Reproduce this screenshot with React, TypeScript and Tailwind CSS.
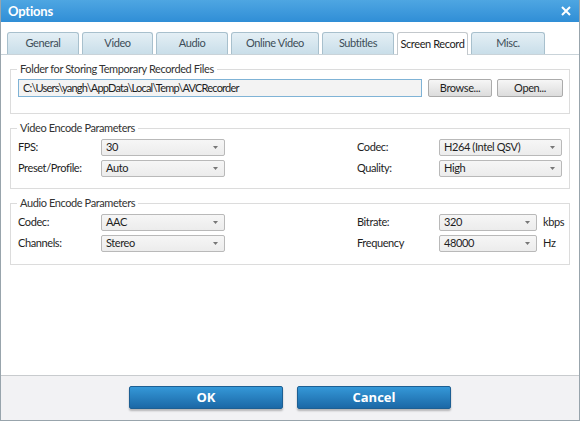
import React from "react";

const font = { fontFamily: 'Lato, "Open Sans", sans-serif' };

const tabs = ["General", "Video", "Audio", "Online Video", "Subtitles", "Screen Record", "Misc."];
const tabWidths = ["w-[72px]", "w-[71px]", "w-[72px]", "w-[88px]", "w-[72px]", "w-[71px]", "w-[74px]"];

const Arrow: React.FC = () => (
  <svg width="5" height="3" viewBox="0 0 5 3" className="shrink-0">
    <path d="M0 0h5L2.5 3z" fill="#777" />
  </svg>
);

const Select: React.FC<{ value: string; width: string }> = ({ value, width }) => (
  <div
    className={`${width} h-[17px] flex items-center justify-between pl-[4px] pr-[6px] border border-[#b9b9b9] rounded-[2px] bg-gradient-to-b from-[#f6f6f6] to-[#ececec] text-[11px] text-[#1e1e1e]`}
  >
    <span>{value}</span>
    <Arrow />
  </div>
);

const Group: React.FC<{ title: string; children: React.ReactNode; className?: string }> = ({ title, children, className }) => (
  <div className={`relative mx-[9px] border border-[#dcdcdc] ${className ?? ""}`}>
    <span className="absolute top-[-8px] left-[6px] px-[3px] bg-white text-[11px] leading-[14px] text-[#333]">{title}</span>
    {children}
  </div>
);

const Row: React.FC<{
  l1: string;
  v1: string;
  l2: string;
  v2: string;
  w2?: string;
  unit?: string;
}> = ({ l1, v1, l2, v2, w2 = "w-[124px]", unit }) => (
  <div className="flex items-center h-[17px]">
    <span className="w-[83px] text-[11px] text-[#1e1e1e]">{l1}</span>
    <Select value={v1} width="w-[124px]" />
    <span className="ml-[132px] w-[82px] text-[11px] text-[#1e1e1e]">{l2}</span>
    <Select value={v2} width={w2} />
    {unit && <span className="ml-[6px] text-[11px] text-[#1e1e1e]">{unit}</span>}
  </div>
);

const btnFont = { fontFamily: '"Open Sans", sans-serif' };

const App: React.FC = () => {
  return (
    <div style={font} className="w-[580px] h-[421px] flex flex-col bg-white border-x border-b border-[#98a4ac] overflow-hidden tracking-[-0.4px]">
      <div className="h-[22px] -mx-px shrink-0 flex items-center justify-between pl-[8px] pr-[9px] bg-gradient-to-b from-[#4ea6e2] to-[#2f8ed6]">
        <span className="text-white font-bold text-[13px] mt-[1px] tracking-[-0.2px]">Options</span>
        <svg width="10" height="10" viewBox="0 0 10 10">
          <path d="M1 1L9 9M9 1L1 9" stroke="white" strokeWidth="2" />
        </svg>
      </div>

      <div className="mt-[10px] flex items-end gap-[3px] pl-[6px] border-b border-[#c9d3d9] h-[23px]">
        {tabs.map((t, i) => {
          const active = t === "Screen Record";
          return (
            <div
              key={t}
              className={`${tabWidths[i]} h-[22px] flex items-center justify-center whitespace-nowrap rounded-t-[3px] border border-b-0 text-[11px] ${
                active
                  ? "bg-white border-[#c3c8cc] text-[#222] h-[23px] -mb-px"
                  : "bg-gradient-to-b from-[#e4eff5] to-[#c9dee9] border-[#a8c0cd] text-[#3d4d58]"
              }`}
            >
              {t}
            </div>
          );
        })}
      </div>

      <div className="flex-1 flex flex-col pt-[14px]">
        <Group title="Folder for Storing Temporary Recorded Files" className="h-[45px] pt-[9px] pl-[7px]">
          <div className="flex items-center gap-[6px]">
            <div className="w-[404px] h-[18px] flex items-center px-[4px] border border-[#7fb3d6] bg-[#f3f3f3] text-[11px] tracking-[-0.8px] text-[#1e1e1e]">
              C:\Users\yangh\AppData\Local\Temp\AVCRecorder
            </div>
            <button className="w-[64px] h-[18px] border border-[#ababab] rounded-[2px] bg-gradient-to-b from-[#f6f6f6] to-[#dcdcdc] text-[11px] text-[#1e1e1e]">
              Browse...
            </button>
            <button className="ml-[-1px] w-[66px] h-[18px] border border-[#ababab] rounded-[2px] bg-gradient-to-b from-[#f6f6f6] to-[#dcdcdc] text-[11px] text-[#1e1e1e]">
              Open...
            </button>
          </div>
        </Group>

        <Group title="Video Encode Parameters" className="mt-[14px] h-[61px] pt-[10px] pl-[7px] flex flex-col gap-[4px]">
          <Row l1="FPS:" v1="30" l2="Codec:" v2="H264 (Intel QSV)" w2="w-[123px]" />
          <Row l1="Preset/Profile:" v1="Auto" l2="Quality:" v2="High" w2="w-[123px]" />
        </Group>

        <Group title="Audio Encode Parameters" className="mt-[14px] h-[62px] pt-[10px] pl-[7px] flex flex-col gap-[4px]">
          <Row l1="Codec:" v1="AAC" l2="Bitrate:" v2="320" w2="w-[98px]" unit="kbps" />
          <Row l1="Channels:" v1="Stereo" l2="Frequency" v2="48000" w2="w-[98px]" unit="Hz" />
        </Group>
      </div>

      <div className="h-[45px] shrink-0 border-t border-[#c8cbce] bg-[#f2f2f4] flex justify-center gap-[14px] pt-[10px] tracking-normal">
        <button style={btnFont} className="w-[154px] h-[23px] rounded-[2px] border border-[#1d5f93] bg-gradient-to-b from-[#3598d8] to-[#1b68a6] text-white font-bold text-[13px] shadow-[0_2px_2px_rgba(0,0,0,0.25)]">
          OK
        </button>
        <button style={btnFont} className="w-[154px] h-[23px] rounded-[2px] border border-[#1d5f93] bg-gradient-to-b from-[#3598d8] to-[#1b68a6] text-white font-bold text-[13px] shadow-[0_2px_2px_rgba(0,0,0,0.25)]">
          Cancel
        </button>
      </div>
    </div>
  );
};

export default App;
